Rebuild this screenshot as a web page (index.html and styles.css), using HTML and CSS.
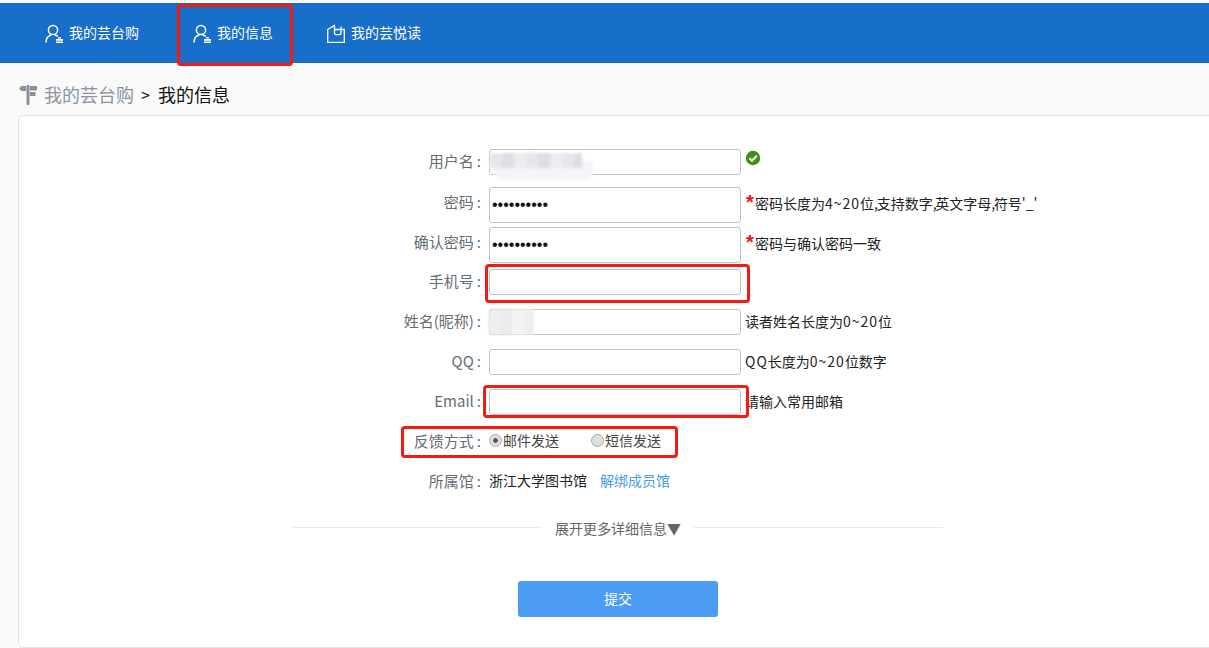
FILE: index.html
```html
<!DOCTYPE html>
<html lang="zh-CN">
<head>
<meta charset="utf-8">
<title>我的信息</title>
<link rel="stylesheet" href="styles.css">
</head>
<body>
<div class="page">
  <header class="topbar">
    <a class="nav-item">
      <svg class="nav-icon" viewBox="0 0 18 20" fill="none" stroke="#fff" stroke-width="1.5"><circle cx="8" cy="7" r="4.600"/><path d="M1 19.500c0-5 2.500-7 5.400-7.600M9.600 11.900c1.200.2 2.300.7 3.200 1.500"/><path d="M11 16.900h7M11 19.300h7" stroke-width="1.600"/><path d="M13 14.900h3" stroke-width="1.400"/></svg>
      <span class="nav-text">我的芸台购</span>
    </a>
    <a class="nav-item">
      <svg class="nav-icon" viewBox="0 0 18 20" fill="none" stroke="#fff" stroke-width="1.5"><circle cx="8" cy="7" r="4.600"/><path d="M1 19.500c0-5 2.500-7 5.400-7.600M9.600 11.900c1.200.2 2.300.7 3.200 1.500"/><path d="M11 16.900h7M11 19.300h7" stroke-width="1.600"/><path d="M13 14.900h3" stroke-width="1.400"/></svg>
      <span class="nav-text">我的信息</span>
    </a>
    <a class="nav-item">
      <svg class="nav-icon" viewBox="0 0 18 20" fill="none" stroke="#fff" stroke-width="1.3"><path d="M.7 6.500 7.500 2.500v4h9.800v12.800H.7z"/><path d="M7.500 6.500v3.700c0 2 6.500 2 6.500 0V3.500"/></svg>
      <span class="nav-text">我的芸悦读</span>
    </a>
  </header>

  <nav class="crumbs">
    <svg class="crumb-icon" viewBox="0 0 18 20" fill="#87919b"><rect x="7.500" y="0" width="3" height="20" rx="1"/><path d="M0 3.500 2.500 1H7v5H2.500z"/><path d="M11 1h7v4.500h-7zM11 7h5.500v4H11z"/></svg>
    <span class="crumb-link">我的芸台购</span>
    <span class="crumb-sep">&gt;</span>
    <span class="crumb-current">我的信息</span>
  </nav>

  <main class="card">
    <form class="form">
      <div class="row">
        <label class="label">用户名<span class="colon">:</span></label>
        <div class="field field-8">
          <div class="input-wrap">
            <input class="input" type="text">
            <span class="smudge smudge-user-low"></span>
            <span class="smudge smudge-user"></span>
          </div>
          <svg class="check" viewBox="0 0 16 16"><circle cx="8" cy="8" r="7.200" fill="#3f8f16"/><path d="M4.300 8.200 7 10.800l4.800-5" fill="none" stroke="#fff" stroke-width="2"/></svg>
        </div>
      </div>
      <div class="row">
        <label class="label">密码<span class="colon">:</span></label>
        <div class="field field-6">
          <input class="input input-tall" type="password" value="1234567890">
          <span class="star">*</span><span class="hint hint-tight">密码长度为<span class="num">4~20</span>位<span class="cm">,</span>支持数字<span class="cm">,</span>英文字母<span class="cm">,</span>符号'_'</span>
        </div>
      </div>
      <div class="row">
        <label class="label">确认密码<span class="colon">:</span></label>
        <div class="field field-6">
          <input class="input input-tall" type="password" value="1234567890">
          <span class="star">*</span><span class="hint hint-tight">密码与确认密码一致</span>
        </div>
      </div>
      <div class="row">
        <label class="label">手机号<span class="colon">:</span></label>
        <div class="field field-8"><input class="input" type="text"></div>
      </div>
      <div class="row">
        <label class="label">姓名(昵称)<span class="colon">:</span></label>
        <div class="field field-8">
          <div class="input-wrap">
            <input class="input" type="text">
            <span class="smudge smudge-name"></span>
          </div>
          <span class="hint">读者姓名长度为<span class="num">0~20</span>位</span>
        </div>
      </div>
      <div class="row">
        <label class="label">QQ<span class="colon">:</span></label>
        <div class="field field-8">
          <input class="input" type="text">
          <span class="hint"><span class="num">QQ</span>长度为<span class="num">0~20</span>位数字</span>
        </div>
      </div>
      <div class="row">
        <label class="label">Email<span class="colon">:</span></label>
        <div class="field field-8">
          <input class="input" type="text">
          <span class="hint">请输入常用邮箱</span>
        </div>
      </div>
      <div class="row">
        <label class="label">反馈方式<span class="colon">:</span></label>
        <div class="field field-center radios">
          <label class="radio"><input type="radio" name="fb" checked>邮件发送</label>
          <label class="radio"><input type="radio" name="fb">短信发送</label>
        </div>
      </div>
      <div class="row">
        <label class="label">所属馆<span class="colon">:</span></label>
        <div class="field field-center">
          <span class="value">浙江大学图书馆</span>
          <a class="link">解绑成员馆</a>
        </div>
      </div>
      <div class="divider"><span class="divider-text">展开更多详细信息▼</span></div>
      <div class="actions"><button class="submit" type="button">提交</button></div>
    </form>
  </main>

  <span class="mark mark-nav"></span>
  <span class="mark mark-phone"></span>
  <span class="mark mark-email"></span>
  <span class="mark mark-radio"></span>
</div>
</body>
</html>
```

FILE: styles.css
```css
* { box-sizing: border-box; }
html, body { margin: 0; height: 100%; }
body {
  background: #fafafa;
  font-family: "Noto Sans CJK SC", "Liberation Sans", sans-serif;
  font-size: 14px;
  color: #222;
  overflow: hidden;
}
.page { position: relative; height: 648px; padding-top: 3px; overflow: hidden; }

.topbar {
  height: 60px;
  background: #176fc9;
  display: flex;
  align-items: center;
  gap: 54px;
  padding-left: 45px;
}
.nav-item { display: flex; align-items: center; gap: 6px; color: #fff; }
.nav-text { padding-bottom: 2px; }
.nav-icon { width: 18px; height: 20px; display: block; }

.crumbs {
  height: 52px;
  display: flex;
  align-items: center;
  padding: 14px 0 4px 19px;
  font-size: 18px;
}
.crumb-icon { width: 18px; height: 20px; margin: 2px 7px 0 0; }
.crumb-link { color: #8a94a0; }
.crumb-sep { margin: 0 8px 0 7px; color: #1c1c30; font-size: 16px; }
.crumb-current { color: #111; }

.card {
  margin: 0 -10px 0 18px;
  height: 533px;
  background: #fff;
  border: 1px solid #dfe2e6;
  border-radius: 5px;
  padding-top: 25px;
}
.form { display: block; }

.row {
  display: grid;
  grid-template-columns: 462px 1fr;
  height: 40px;
}
.label {
  display: flex;
  align-items: center;
  justify-content: flex-end;
  color: #646c74;
  font-size: 15px;
  padding-bottom: 2px;
  white-space: nowrap;
}
.colon { margin-left: 3px; }
.field { display: flex; align-items: flex-start; margin-left: 8px; }
.field-8 { padding-top: 8px; }
.field-6 { padding-top: 6px; }
.field-center { align-items: center; padding-bottom: 2px; }

.input-wrap { position: relative; width: 252px; height: 26px; overflow: visible; }
.input {
  width: 252px;
  height: 26px;
  flex: none;
  padding: 0 2px;
  background: #fff;
  border: 1px solid #b8c2d0;
  border-radius: 3px;
  outline: none;
  font-family: "Liberation Sans", sans-serif;
  font-size: 16px;
  color: #111;
}
.input-tall { height: 36px; }
.smudge { position: absolute; display: block; pointer-events: none; }
.smudge-user {
  left: 1px; top: 4px; width: 92px; height: 15px;
  background: repeating-linear-gradient(90deg, #e6e7ea 0 12px, #dcdee2 12px 24px, #ecedef 24px 36px);
  filter: blur(1.5px);
}
.smudge-user-low {
  left: 0; top: 12px; width: 104px; height: 19px;
  background: #f3f5f7;
  border-radius: 0 0 12px 40px;
  filter: blur(1.5px);
}
.smudge-name {
  left: -1px; top: 0; width: 46px; height: 26px;
  background: repeating-linear-gradient(90deg, #eeeff1 0 12px, #e9ebed 12px 24px, #f2f3f5 24px 36px);
  border-radius: 8px 0 0 8px;
  filter: blur(1px);
}
.check { width: 16px; height: 16px; margin: 1px 0 0 4px; flex: none; }
.star {
  margin: 3px 0 0 5px;
  color: #f01010;
  font-family: "Liberation Sans", sans-serif;
  font-weight: 700;
  font-size: 20px;
  line-height: 24px;
  height: 24px;
  width: 9px;
}
.hint { margin-left: 4px; line-height: 24px; color: #222; white-space: nowrap; }
.hint-tight { margin-left: 0; line-height: 32px; }
.num { letter-spacing: 1px; }
.cm { letter-spacing: -1.3px; }

.radios { gap: 32px; }
.radio { display: flex; align-items: center; color: #444; width: 70px; white-space: nowrap; gap: 1px; }
.radio input {
  appearance: none;
  margin: 0;
  width: 13px;
  height: 13px;
  flex: none;
  border: 1px solid #a8a8a8;
  border-radius: 50%;
  background: #dedede;
}
.radio input:checked { background: radial-gradient(circle, #555 0 2px, #dedede 2.6px); }
.value { color: #222; }
.link { color: #4a9be8; margin-left: 13px; }

.divider {
  position: relative;
  width: 650px;
  margin: 6px 0 0 274px;
  height: 1px;
  top: 20px;
  background: #eaeaea;
  display: flex;
  justify-content: center;
  align-items: center;
}
.divider-text { background: #fff; padding: 0 13px; color: #666; white-space: nowrap; position: relative; }

.actions { display: flex; padding: 73px 0 0 499px; }
.submit {
  width: 200px;
  height: 36px;
  border: 0;
  border-radius: 3px;
  background: #4a9df3;
  color: #fff;
  font: inherit;
  padding: 0 0 2px;
}

.mark {
  position: absolute;
  border: 3px solid #f5190f;
  border-radius: 4px;
  pointer-events: none;
}
.mark-nav { left: 177px; top: 4px; width: 116px; height: 62px; }
.mark-phone { left: 485px; top: 264px; width: 265px; height: 39px; }
.mark-email { left: 483px; top: 385px; width: 266px; height: 33px; }
.mark-radio { left: 401px; top: 426px; width: 277px; height: 32px; }
```
